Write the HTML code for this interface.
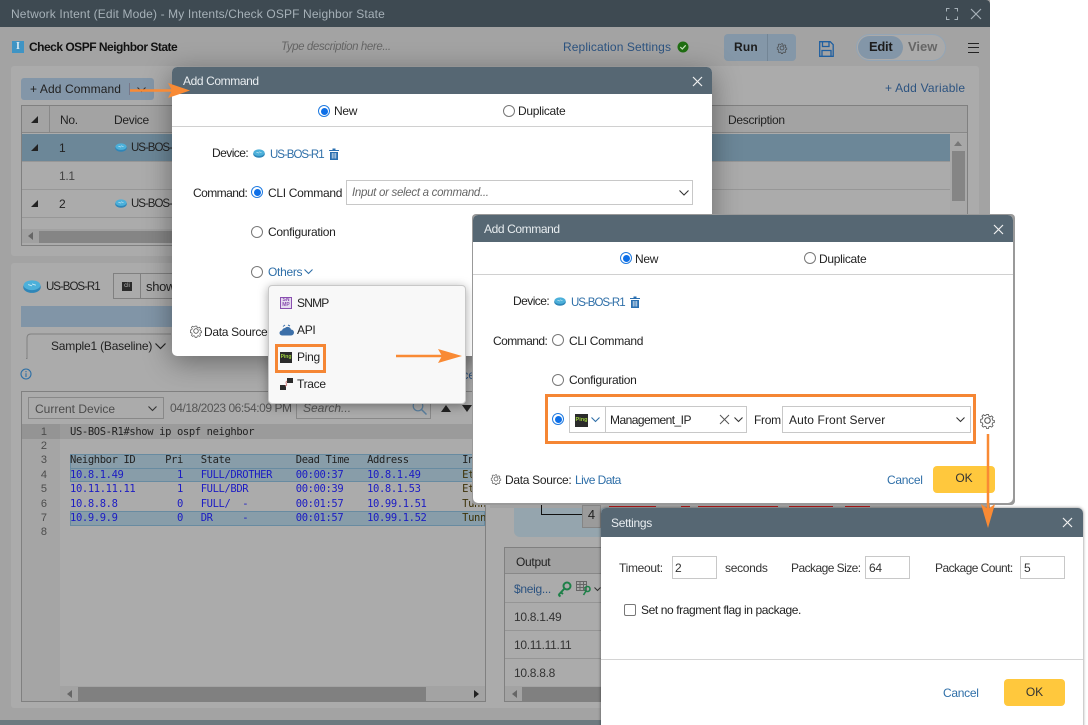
<!DOCTYPE html>
<html><head><meta charset="utf-8"><style>
html,body{margin:0;padding:0;background:#fff}
#r{position:relative;width:1088px;height:725px;overflow:hidden;font:12px "Liberation Sans",sans-serif;color:#222;background:#fff;letter-spacing:-.3px}
.a{position:absolute;box-sizing:border-box}
.t{position:absolute;white-space:nowrap;line-height:16px}
.b{color:#2f6fa8}
.u{letter-spacing:-1px;font-size:11.500px}
.l{letter-spacing:-.55px}
.rd{position:absolute;width:12px;height:12px;border:1px solid #777;border-radius:50%;box-sizing:border-box;background:#fff}
.on{border:1px solid #1f7ae0}
.on:after{content:"";position:absolute;left:1.5px;top:1.5px;width:7px;height:7px;border-radius:50%;background:#0d6fe8}
.dlg{position:absolute;background:#fff;border-radius:5px;box-shadow:0 6px 28px rgba(0,0,0,.4);overflow:hidden}
.hd{position:absolute;left:0;right:0;top:0;background:#566773;color:#e8edf0;font-weight:normal}
.in{position:absolute;border:1px solid #c8c8c8;box-sizing:border-box;background:#fff}
.ok{position:absolute;background:#ffc83d;border-radius:4px;text-align:center;color:#333;letter-spacing:0}
.ti{color:#e8edf0;letter-spacing:-.4px}
pre{margin:0;font:10.5px/14.4px "DejaVu Sans Mono","Liberation Mono",monospace;letter-spacing:-.38px}
svg{position:absolute;overflow:visible}
</style></head><body><div id="r">
<svg width="0" height="0" style="position:absolute"><defs>
<symbol id="gear" viewBox="0 0 16 16"><circle cx="8" cy="8" r="2.6" fill="none" stroke="currentColor" stroke-width="1"/><path d="M6.8 1h2.4l.4 2 1.5.7 1.8-1.1 1.6 1.7-1.1 1.7.6 1.6 2 .4v2.4l-2 .4-.6 1.6 1.1 1.7-1.6 1.7-1.8-1.1-1.5.7-.4 2H6.8l-.4-2-1.5-.7-1.8 1.1-1.6-1.7 1.1-1.7-.6-1.6-2-.4V6.6l2-.4.6-1.6-1.1-1.7 1.6-1.7 1.8 1.1 1.5-.7z" fill="none" stroke="currentColor" stroke-width="1" transform="translate(1.6 1.6) scale(.8)"/></symbol>
<symbol id="dev" viewBox="0 0 14 10"><ellipse cx="7" cy="5.500" rx="6.800" ry="4.500" fill="#2f86b8"/><ellipse cx="7" cy="4" rx="6.500" ry="3.800" fill="#4cb0da"/><path d="M4 3.500l3 1M7 3l3 1" stroke="#cdeaf5" stroke-width=".7"/></symbol>
<symbol id="trash" viewBox="0 0 10 12"><path d="M0 2h10v1H0zM3.500 .5h3V2h-3zM1 4h8v8H1z" fill="#2a6fb0"/><path d="M3.200 5v5.500M5 5v5.500M6.800 5v5.500" stroke="#fff" stroke-width=".7"/></symbol>
</defs></svg>

<!-- main window -->
<div class="a" style="left:0;top:0;width:990px;height:720px;background:#a3a3a3"></div>
<div class="a" style="left:0;top:720px;width:990px;height:5px;background:#6d7a80"></div>
<div class="a" style="left:0;top:0;width:990px;height:27px;background:#3e4a52;border-radius:0 4px 0 0"></div>
<div class="t" style="left:11px;top:6px;color:#a6b1b8;letter-spacing:.13px">Network Intent (Edit Mode) - My Intents/Check OSPF Neighbor State</div>
<svg style="left:946px;top:8px" width="12" height="12"><path d="M.5 3.500v-3h3M8.500 .5h3v3M11.500 8.500v3h-3M3.500 11.500h-3v-3" fill="none" stroke="#a6b1b8"/></svg>
<svg style="left:971px;top:9px" width="10" height="10"><path d="M0 0l10 10M10 0L0 10" stroke="#a6b1b8" stroke-width="1.200"/></svg>

<div class="a" style="left:12px;top:41px;width:12px;height:12px;background:#3f94c4;color:#dfeef6;font:bold 10px/12px 'Liberation Serif',serif;text-align:center;letter-spacing:0">I</div>
<div class="t" style="left:29px;top:39px;font-weight:bold;color:#111;letter-spacing:-.5px">Check OSPF Neighbor State</div>
<div class="t" style="left:281px;top:39px;font-style:italic;color:#666;font-size:11.500px;letter-spacing:-.4px">Type description here...</div>
<div class="t" style="left:563px;top:39px;color:#2c5380;letter-spacing:.1px">Replication Settings</div>
<svg style="left:677px;top:41px" width="12" height="12"><circle cx="6" cy="6" r="5.500" fill="#1f6e12"/><path d="M3.300 6l2 2 3.400-3.700" fill="none" stroke="#c9e5c0" stroke-width="1.200"/></svg>
<div class="a" style="left:724px;top:34px;width:72px;height:27px;background:#8497a8;border-radius:4px"></div>
<div class="a" style="left:767px;top:34px;width:1px;height:27px;background:#738595"></div>
<div class="t" style="left:734px;top:39px;font-weight:bold;color:#1c1c1c;letter-spacing:.2px">Run</div>
<svg style="left:776px;top:42px;color:#444" width="12" height="12"><use href="#gear" width="12" height="12"/></svg>
<svg style="left:819px;top:41px" width="15" height="16"><path d="M.7 .7h10.500l3 3v11.600H.7zM3.500 1v4.500h6.500V1M3 15v-5.500h9V15" fill="none" stroke="#1f5fa0" stroke-width="1.300"/></svg>
<div class="a" style="left:856px;top:34px;width:90px;height:27px;background:#aaa;border:1px solid #93a5b6;border-radius:14px"></div>
<div class="a" style="left:858px;top:36px;width:45px;height:23px;background:#8396a8;border-radius:12px"></div>
<div class="t" style="left:869px;top:39px;font-weight:bold;color:#1c1c1c;font-size:13px;letter-spacing:-.3px">Edit</div>
<div class="t" style="left:908px;top:39px;font-weight:bold;color:#666;font-size:13px;letter-spacing:0">View</div>
<div class="a" style="left:968px;top:43px;width:11px;height:1px;background:#222;box-shadow:0 4px 0 #222,0 9px 0 #222"></div>

<!-- panel 1 -->
<div class="a" style="left:11px;top:66px;width:968px;height:190px;background:#ababab;border-radius:3px"></div>
<div class="a" style="left:21px;top:78px;width:133px;height:22px;background:#8396a8;border-radius:3px"></div>
<div class="t" style="left:30px;top:81px;color:#222;letter-spacing:.1px">+ Add Command</div>
<div class="a" style="left:129px;top:83px;width:1px;height:12px;background:#778"></div>
<svg style="left:137px;top:87px" width="9" height="6"><path d="M.5 .5l4 4 4-4" fill="none" stroke="#333"/></svg>
<div class="t" style="left:885px;top:80px;color:#2c5380;letter-spacing:.2px">+ Add Variable</div>
<div class="a" style="left:21px;top:105px;width:947px;height:141px;border:1px solid #808080"></div>
<div class="a" style="left:22px;top:106px;width:945px;height:27px;background:#a3a3a3;border-bottom:1px solid #888"></div>
<div class="a" style="left:49px;top:106px;width:1px;height:27px;background:#888"></div>
<div class="t" style="left:60px;top:112px">No.</div>
<div class="t" style="left:114px;top:112px">Device</div>
<div class="t" style="left:728px;top:112px">Description</div>
<div class="a" style="left:22px;top:134px;width:928px;height:27px;background:#6c8798"></div>
<div class="a" style="left:22px;top:189px;width:928px;height:1px;background:#979797"></div>
<div class="a" style="left:22px;top:217px;width:928px;height:1px;background:#979797"></div>
<div class="a" style="left:22px;top:161px;width:928px;height:1px;background:#979797"></div>
<svg style="left:31px;top:116px" width="8" height="8"><path d="M7 0v7H0z" fill="#222"/></svg>
<svg style="left:31px;top:144px" width="8" height="8"><path d="M7 0v7H0z" fill="#222"/></svg>
<svg style="left:31px;top:200px" width="8" height="8"><path d="M7 0v7H0z" fill="#222"/></svg>
<div class="t" style="left:59px;top:140px">1</div>
<div class="t" style="left:59px;top:168px;color:#444">1.1</div>
<div class="t" style="left:59px;top:196px">2</div>
<svg style="left:115px;top:143px" width="12" height="9"><use href="#dev" width="12" height="9"/></svg>
<svg style="left:115px;top:199px" width="12" height="9"><use href="#dev" width="12" height="9"/></svg>
<div class="t u" style="left:131px;top:140px;color:#222">US-BOS-R1</div>
<div class="t u" style="left:131px;top:196px;color:#222">US-BOS-R1</div>
<div class="a" style="left:22px;top:229px;width:945px;height:14px;background:#a1a1a1"></div>
<div class="a" style="left:39px;top:231px;width:500px;height:12px;background:#858585"></div>
<svg style="left:28px;top:232px" width="5" height="8"><path d="M5 0v8L0 4z" fill="#666"/></svg>
<div class="a" style="left:950px;top:134px;width:17px;height:95px;background:#a8a8a8"></div>
<div class="a" style="left:952px;top:151px;width:13px;height:50px;background:#858585"></div>
<svg style="left:954px;top:141px" width="8" height="5"><path d="M0 5h8L4 0z" fill="#777"/></svg>

<!-- panel 2 -->
<div class="a" style="left:11px;top:263px;width:968px;height:445px;background:#ababab;border-radius:3px"></div>
<svg style="left:23px;top:280px" width="18" height="13"><use href="#dev" width="18" height="13"/></svg>
<div class="t u" style="left:46px;top:279px;color:#222">US-BOS-R1</div>
<div class="a" style="left:113px;top:273px;width:120px;height:26px;border:1px solid #808080"></div>
<div class="a" style="left:140px;top:273px;width:1px;height:26px;background:#808080"></div>
<div class="a" style="left:122px;top:282px;width:10px;height:9px;background:#2b2b2b;color:#bbb;font:6px/9px 'Liberation Sans',sans-serif;text-align:center;letter-spacing:0">cli</div>
<div class="t" style="left:146px;top:279px;color:#222;font-size:13px">show ip ospf neighbor</div>
<div class="a" style="left:21px;top:306px;width:460px;height:21px;background:#8195a7"></div>
<svg style="left:26px;top:333px" width="150" height="26"><path d="M0 25.500h1V5q0-4 4-4h140" fill="none" stroke="#808080"/></svg>
<div class="t" style="left:51px;top:338px;color:#222;letter-spacing:-.2px">Sample1 (Baseline)</div>
<svg style="left:155px;top:343px" width="11" height="7"><path d="M.5 .5l5 5 5-5" fill="none" stroke="#222" stroke-width="1.200"/></svg>
<svg style="left:20px;top:368px" width="12" height="12"><circle cx="6" cy="6" r="5" fill="none" stroke="#2c6ea5" stroke-width="1.100"/><path d="M6 5.200v3.800M6 3v1.200" stroke="#2c6ea5" stroke-width="1.100"/></svg>
<div class="t" style="left:431px;top:367px;color:#2c5380;letter-spacing:0">Replace</div>

<!-- code box -->
<div class="a" style="left:21px;top:391px;width:465px;height:311px;border:1px solid #808080;background:#ababab"></div>
<div class="a" style="left:28px;top:397px;width:136px;height:22px;border:1px solid #888"></div>
<div class="t" style="left:35px;top:401px;color:#4c4c4c;letter-spacing:0">Current Device</div>
<svg style="left:148px;top:406px" width="9" height="6"><path d="M.5 .5l4 4 4-4" fill="none" stroke="#333" stroke-width="1.100"/></svg>
<div class="t" style="left:170px;top:400px;color:#555;letter-spacing:-.45px">04/18/2023 06:54:09 PM</div>
<div class="a" style="left:296px;top:398px;width:135px;height:21px;border:1px solid #888"></div>
<div class="t" style="left:303px;top:400px;font-style:italic;color:#555;letter-spacing:0">Search...</div>
<svg style="left:412px;top:400px" width="15" height="15"><circle cx="6" cy="6" r="4.800" fill="none" stroke="#5a7f9e" stroke-width="1.200"/><path d="M9.500 9.500l5 5" stroke="#5a7f9e" stroke-width="1.500"/></svg>
<svg style="left:441px;top:405px" width="10" height="7"><path d="M0 7h10L5 0z" fill="#222"/></svg>
<svg style="left:462px;top:405px" width="10" height="7"><path d="M0 0h10L5 7z" fill="#222"/></svg>
<div class="a" style="left:22px;top:424px;width:38px;height:277px;background:#a5a5a5"></div>
<div class="a" style="left:22px;top:424px;width:38px;height:15px;background:#949494"></div>
<div class="a" style="left:60px;top:424px;width:425px;height:15px;background:#9b9b9b"></div>
<div class="a" style="left:70px;top:454px;width:415px;height:14px;background:#889da9;border:1px solid #688ba1;border-bottom:0"></div>
<div class="a" style="left:70px;top:468px;width:415px;height:14px;background:#889da9;border:1px solid #688ba1"></div>
<div class="a" style="left:70px;top:511px;width:415px;height:15px;background:#889da9;border:1px solid #688ba1"></div>
<pre class="a" style="left:29px;top:424.500px;width:18px;text-align:right;color:#4c4c4c;font-family:'Liberation Sans',sans-serif;font-size:11px;letter-spacing:0">1
2
3
4
5
6
7
8</pre>
<div class="a" style="left:70px;top:424.500px;width:415px;height:125px;overflow:hidden"><pre style="color:#222;">US-BOS-R1#show ip ospf neighbor

Neighbor ID     Pri   State           Dead Time   Address         Interface
<span style="color:#1c1cc4">10.8.1.49         1   FULL/DROTHER    00:00:37    10.8.1.49       </span><span style="color:#3d3208">Ethernet0/2</span>
<span style="color:#1c1cc4">10.11.11.11       1   FULL/BDR        00:00:39    10.8.1.53       </span><span style="color:#3d3208">Ethernet0/1</span>
<span style="color:#1c1cc4">10.8.8.8          0   FULL/  -        00:01:57    10.99.1.51      </span><span style="color:#3d3208">Tunnel0</span>
<span style="color:#1c1cc4">10.9.9.9          0   DR     -        00:01:57    10.99.1.52      </span><span style="color:#3d3208">Tunnel1</span></pre></div>
<div class="a" style="left:60px;top:686px;width:425px;height:15px;background:#a3a3a3"></div>
<div class="a" style="left:78px;top:687px;width:348px;height:14px;background:#808080"></div>
<svg style="left:67px;top:690px" width="5" height="8"><path d="M5 0v8L0 4z" fill="#666"/></svg>
<svg style="left:474px;top:690px" width="5" height="8"><path d="M0 0v8l5-4z" fill="#222"/></svg>

<!-- right output panel -->
<div class="a" style="left:514px;top:440px;width:465px;height:97px;background:#95a5ae;border-radius:0 0 0 6px"></div>
<div class="a" style="left:490px;top:503px;width:500px;height:5px;background:#a3a3a3"></div>
<div class="a" style="left:609px;top:506px;width:47px;height:1px;background:#b01818"></div>
<div class="a" style="left:681px;top:506px;width:9px;height:1px;background:#b01818"></div>
<div class="a" style="left:698px;top:506px;width:80px;height:1px;background:#b01818"></div>
<div class="a" style="left:789px;top:506px;width:44px;height:1px;background:#b01818"></div>
<div class="a" style="left:845px;top:506px;width:25px;height:1px;background:#b01818"></div>
<svg style="left:541px;top:503px" width="42" height="13"><path d="M.5 0v11.500H41" fill="none" stroke="#111"/></svg>
<div class="a" style="left:582px;top:505px;width:19px;height:23px;background:#9b9b9b;border:1px solid #858585;color:#222;line-height:18px;text-align:center;font-size:13px;letter-spacing:0">4</div>
<div class="a" style="left:504px;top:547px;width:475px;height:155px;border:1px solid #808080;background:#ababab"></div>
<div class="a" style="left:505px;top:548px;width:474px;height:26px;background:#a1a1a1;border-bottom:1px solid #888"></div>
<div class="t" style="left:516px;top:554px;color:#222">Output</div>
<div class="t" style="left:514px;top:581px;color:#2c5380">$neig...</div>
<svg style="left:557px;top:581px" width="15" height="16"><circle cx="10" cy="5" r="3.500" fill="none" stroke="#1d8048" stroke-width="2"/><path d="M7.500 7.500L1.500 14M1.500 14l2 1.500M4 11.500l2 1.500" stroke="#1d8048" stroke-width="2"/></svg>
<svg style="left:576px;top:581px" width="15" height="15"><path d="M.5 .5h10v9H.5zM.5 3.500h10M.5 6.500h10M4 .5v9M7.500 .5v9" fill="none" stroke="#666"/><circle cx="11.500" cy="8" r="2.500" fill="none" stroke="#1d8048" stroke-width="1.600"/><path d="M10 10l-2.500 4" stroke="#1d8048" stroke-width="1.600"/></svg>
<svg style="left:594px;top:587px" width="7" height="5"><path d="M.5 .5l3 3 3-3" fill="none" stroke="#333"/></svg>
<div class="a" style="left:505px;top:602px;width:474px;height:1px;background:#959595"></div>
<div class="a" style="left:505px;top:630px;width:474px;height:1px;background:#959595"></div>
<div class="a" style="left:505px;top:658px;width:474px;height:1px;background:#959595"></div>
<div class="t" style="left:514px;top:609px;color:#333">10.8.1.49</div>
<div class="t" style="left:514px;top:637px;color:#333">10.11.11.11</div>
<div class="t" style="left:514px;top:665px;color:#333">10.8.8.8</div>
<div class="a" style="left:505px;top:686px;width:474px;height:15px;background:#a3a3a3"></div>
<div class="a" style="left:522px;top:687px;width:300px;height:14px;background:#808080"></div>
<svg style="left:512px;top:690px" width="5" height="8"><path d="M5 0v8L0 4z" fill="#666"/></svg>

<!-- dialog 1 -->
<div class="dlg" style="left:172px;top:67px;width:540px;height:289px">
<div class="hd" style="height:27px"></div>
<div class="t ti" style="left:11px;top:6px">Add Command</div>
<svg style="left:521px;top:10px" width="9" height="9"><path d="M0 0l9 9M9 0L0 9" stroke="#f0f0f0" stroke-width="1.200"/></svg>
<div class="rd on" style="left:146px;top:38px"></div><div class="t" style="left:162px;top:36px">New</div>
<div class="rd" style="left:331px;top:38px"></div><div class="t" style="left:346px;top:36px">Duplicate</div>
<div class="a" style="left:0;top:59px;width:540px;height:1px;background:#d0d0d0"></div>
<div class="t l" style="left:40px;top:78px">Device:</div>
<svg style="left:81px;top:82px" width="12" height="9"><use href="#dev" width="12" height="9"/></svg>
<div class="t b u" style="left:98px;top:80px">US-BOS-R1</div>
<svg style="left:157px;top:81px" width="10" height="12"><use href="#trash" width="10" height="12"/></svg>
<div class="t l" style="left:21px;top:118px">Command:</div>
<div class="rd on" style="left:79px;top:119px"></div>
<div class="t" style="left:96px;top:118px">CLI Command</div>
<div class="in" style="left:174px;top:113px;width:347px;height:25px"></div>
<div class="t" style="left:180px;top:118px;font-style:italic;color:#666;font-size:11.500px">Input or select a command...</div>
<svg style="left:507px;top:123px" width="10" height="6"><path d="M.5 .5l4.500 4.500 4.500-4.500" fill="none" stroke="#333" stroke-width="1.100"/></svg>
<div class="rd" style="left:79px;top:159px"></div><div class="t" style="left:96px;top:157px">Configuration</div>
<div class="rd" style="left:79px;top:199px"></div><div class="t b" style="left:96px;top:197px">Others</div>
<svg style="left:132px;top:202px" width="9" height="6"><path d="M.5 .5l4 4 4-4" fill="none" stroke="#2f6fa8" stroke-width="1.100"/></svg>
<svg style="left:17px;top:257px;color:#555" width="14" height="14"><use href="#gear" width="14" height="14"/></svg>
<div class="t" style="left:32px;top:257px">Data Source:</div>
</div>

<!-- dropdown -->
<div class="a" style="left:268px;top:285px;width:198px;height:119px;background:#f8f8f8;border:1px solid #c8c8c8;border-radius:4px;box-shadow:0 2px 10px rgba(0,0,0,.35)"></div>
<div class="a" style="left:280px;top:297px;width:12px;height:12px;background:#e6dcef;border:1px solid #8a4fb0;color:#8a4fb0;font:bold 5px/5px 'Liberation Sans',sans-serif;text-align:center;letter-spacing:0">SN<br>MP</div>
<div class="t" style="left:297px;top:295px;letter-spacing:-.8px">SNMP</div>
<svg style="left:280px;top:324px" width="13" height="12"><path d="M2 11.500a2.500 2.500 0 0 1 0-5 3.500 3.500 0 0 1 3-2.500 3.500 3.500 0 0 1 6 1.500 3 3 0 0 1 0 6z" fill="#3c6fa8"/><path d="M3 2.500l2-1.500M8 1l2 1" stroke="#3c6fa8"/></svg>
<div class="t" style="left:297px;top:322px">API</div>
<div class="a" style="left:275px;top:344px;width:51px;height:29px;border:3px solid #f58634"></div>
<div class="a" style="left:280px;top:352px;width:12px;height:11px;background:#2b2b2b;color:#9ccf3c;font:bold 5px/11px 'Liberation Sans',sans-serif;text-align:center;letter-spacing:0">Ping</div>
<div class="t" style="left:297px;top:349px">Ping</div>
<svg style="left:280px;top:378px" width="13" height="13"><path d="M7 0h6v5H7zM0 7h6v5H0z" fill="#2b2b2b"/><path d="M7 3C4 5 9 7 5 8" fill="none" stroke="#d08080"/></svg>
<div class="t" style="left:297px;top:376px">Trace</div>
<svg style="left:396px;top:349px" width="68" height="16"><path d="M0 7h50" stroke="#f98a34" stroke-width="2.500"/><path d="M42 0l24 7-24 7 4-7z" fill="#f98a34"/></svg>

<!-- arrow 1 -->
<svg style="left:130px;top:83px" width="60" height="16"><path d="M0 7.500h45" stroke="#f98a34" stroke-width="2.500"/><path d="M38 0l22 7.500L38 15l4-7.500z" fill="#f98a34"/></svg>

<!-- dialog 2 -->
<div class="a" style="left:472px;top:214px;width:543px;height:291px;background:#999;border-radius:4px"></div>
<div class="dlg" style="left:473px;top:215px;width:540px;height:288px;box-shadow:none">
<div class="hd" style="height:27px"></div>
<div class="t ti" style="left:11px;top:6px">Add Command</div>
<svg style="left:521px;top:10px" width="9" height="9"><path d="M0 0l9 9M9 0L0 9" stroke="#f0f0f0" stroke-width="1.200"/></svg>
<div class="rd on" style="left:147px;top:37px"></div><div class="t" style="left:162px;top:36px">New</div>
<div class="rd" style="left:331px;top:37px"></div><div class="t" style="left:346px;top:36px">Duplicate</div>
<div class="a" style="left:0;top:59px;width:540px;height:1px;background:#d0d0d0"></div>
<div class="t l" style="left:40px;top:78px">Device:</div>
<svg style="left:81px;top:82px" width="12" height="9"><use href="#dev" width="12" height="9"/></svg>
<div class="t b u" style="left:98px;top:80px">US-BOS-R1</div>
<svg style="left:157px;top:81px" width="10" height="12"><use href="#trash" width="10" height="12"/></svg>
<div class="t l" style="left:20px;top:118px">Command:</div>
<div class="rd" style="left:79px;top:119px"></div>
<div class="t" style="left:96px;top:118px">CLI Command</div>
<div class="rd" style="left:79px;top:159px"></div><div class="t" style="left:96px;top:157px">Configuration</div>
<div class="a" style="left:72px;top:179px;width:431px;height:50px;border:3px solid #f58634"></div>
<div class="rd on" style="left:79px;top:198px"></div>
<div class="in" style="left:96px;top:191px;width:178px;height:27px"></div>
<div class="a" style="left:132px;top:191px;width:1px;height:27px;background:#c8c8c8"></div>
<div class="a" style="left:102px;top:199px;width:13px;height:13px;background:#2b2b2b;color:#9ccf3c;font:bold 5.500px/13px 'Liberation Sans',sans-serif;text-align:center;letter-spacing:0">Ping</div>
<svg style="left:118px;top:202px" width="9" height="6"><path d="M.5 .5l4 4 4-4" fill="none" stroke="#2f6fa8" stroke-width="1.100"/></svg>
<div class="t l" style="left:137px;top:197px">Management_IP</div>
<svg style="left:247px;top:200px" width="9" height="9"><path d="M0 0l9 9M9 0L0 9" stroke="#555"/></svg>
<svg style="left:261px;top:202px" width="9" height="6"><path d="M.5 .5l4 4 4-4" fill="none" stroke="#333" stroke-width="1.100"/></svg>
<div class="t" style="left:281px;top:197px">From</div>
<div class="in" style="left:309px;top:191px;width:189px;height:27px"></div>
<div class="t" style="left:316px;top:197px;letter-spacing:.1px">Auto Front Server</div>
<svg style="left:483px;top:202px" width="9" height="6"><path d="M.5 .5l4 4 4-4" fill="none" stroke="#333" stroke-width="1.100"/></svg>
<svg style="left:506px;top:197px;color:#555" width="17" height="17"><use href="#gear" width="17" height="17"/></svg>
<svg style="left:17px;top:258px;color:#555" width="12" height="12"><use href="#gear" width="12" height="12"/></svg>
<div class="t" style="left:32px;top:257px">Data Source:</div>
<div class="t b l" style="left:102px;top:257px">Live Data</div>
<div class="t b" style="left:414px;top:257px">Cancel</div>
<div class="ok" style="left:460px;top:251px;width:62px;height:27px;line-height:25px">OK</div>
</div>

<!-- dialog 3 -->
<div class="dlg" style="left:601px;top:508px;width:482px;height:230px;box-shadow:0 0 3px rgba(0,0,0,.5)">
<div class="hd" style="height:29px"></div>
<div class="t" style="left:10px;top:7px;color:#e8edf0">Settings</div>
<svg style="left:462px;top:10px" width="9" height="9"><path d="M0 0l9 9M9 0L0 9" stroke="#f0f0f0" stroke-width="1.200"/></svg>
<div class="t" style="left:18px;top:52px;color:#333">Timeout:</div>
<div class="in" style="left:71px;top:48px;width:45px;height:23px"></div>
<div class="t" style="left:74px;top:52px;color:#333">2</div>
<div class="t" style="left:124px;top:52px;color:#333">seconds</div>
<div class="t l" style="left:190px;top:52px;color:#333">Package Size:</div>
<div class="in" style="left:264px;top:48px;width:45px;height:23px"></div>
<div class="t" style="left:268px;top:52px;color:#333">64</div>
<div class="t l" style="left:334px;top:52px;color:#333">Package Count:</div>
<div class="in" style="left:419px;top:48px;width:45px;height:23px"></div>
<div class="t" style="left:423px;top:52px;color:#333">5</div>
<div class="a" style="left:23px;top:96px;width:12px;height:12px;border:1px solid #777;border-radius:2px"></div>
<div class="t" style="left:40px;top:94px;color:#222;letter-spacing:-.4px">Set no fragment flag in package.</div>
<div class="a" style="left:0;top:151px;width:482px;height:1px;background:#d4d4d4"></div>
<div class="t b" style="left:342px;top:177px">Cancel</div>
<div class="ok" style="left:403px;top:171px;width:61px;height:27px;line-height:27px">OK</div>
</div>

<!-- arrow 2 -->
<svg style="left:980px;top:434px" width="16" height="95"><path d="M8 0v80" stroke="#f98a34" stroke-width="2.500"/><path d="M1 70l7 24 7-24-7 5z" fill="#f98a34"/></svg>
</div></body></html>
